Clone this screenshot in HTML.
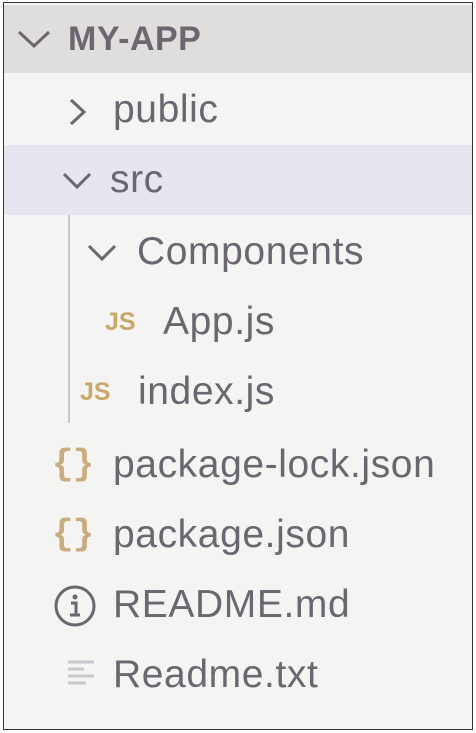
<!DOCTYPE html>
<html><head><style>
body{margin:0;width:476px;height:733px;background:#fff;overflow:hidden;}
#f{position:absolute;left:3px;top:2px;width:468px;height:726px;border:1px solid #333;background:#f4f4f3;}
.row{position:absolute;left:0;width:468px;height:70px;}
.t{position:absolute;font-family:"Liberation Sans",sans-serif;font-size:39px;letter-spacing:0.6px;color:#6b6670;line-height:70px;top:0;white-space:nowrap;}
svg{position:absolute;}
.js{position:absolute;font-family:"Liberation Sans",sans-serif;font-weight:bold;font-size:25px;color:#c9a86a;line-height:70px;}
.br{position:absolute;font-family:"Liberation Mono",monospace;font-weight:bold;font-size:36px;color:#c9ad80;line-height:70px;letter-spacing:-1px;}
</style></head><body>
<div id="f">
<div class="row" style="top:2px;background:#e0dedd;height:68px">
<svg style="left:12px;top:22px" width="36" height="24"><path d="M3 5 L18 19 L33 5" stroke="#6b6670" stroke-width="3" fill="none"/></svg>
<div class="t" style="left:64px;font-weight:bold;font-size:34px;letter-spacing:0.5px;line-height:68px">MY-APP</div></div>
<div class="row" style="top:72px">
<svg style="left:62px;top:22px" width="22" height="30"><path d="M5 3 L18 15 L5 27" stroke="#6b6670" stroke-width="3" fill="none"/></svg>
<div class="t" style="left:109px">public</div></div>
<div class="row" style="top:142px;background:#e6e6f0">
<svg style="left:57px;top:26px" width="32" height="20"><path d="M3 3 L16 16 L29 3" stroke="#6b6670" stroke-width="3" fill="none"/></svg>
<div class="t" style="left:106px">src</div></div>
<div style="position:absolute;left:64px;top:212px;width:2px;height:208px;background:#c9c8d2"></div>
<div class="row" style="top:214px">
<svg style="left:82px;top:26px" width="32" height="20"><path d="M3 3 L16 16 L29 3" stroke="#6b6670" stroke-width="3" fill="none"/></svg>
<div class="t" style="left:133px">Components</div></div>
<div class="row" style="top:284px">
<div class="js" style="left:101px">JS</div>
<div class="t" style="left:159px">App.js</div></div>
<div class="row" style="top:354px">
<div class="js" style="left:76px">JS</div>
<div class="t" style="left:134px">index.js</div></div>
<div class="row" style="top:427px">
<div class="br" style="left:48px">{}</div>
<div class="t" style="left:109px">package-lock.json</div></div>
<div class="row" style="top:497px">
<div class="br" style="left:48px">{}</div>
<div class="t" style="left:109px">package.json</div></div>
<div class="row" style="top:567px">
<svg style="left:49px;top:14px" width="44" height="44"><circle cx="22" cy="22" r="19" stroke="#6b6670" stroke-width="3" fill="none"/><circle cx="22" cy="13" r="2.5" fill="#6b6670"/><path d="M18 19h5v11M17 31h10" stroke="#6b6670" stroke-width="3" fill="none"/></svg>
<div class="t" style="left:109px">README.md</div></div>
<div class="row" style="top:637px">
<svg style="left:60px;top:18px" width="36" height="32"><g stroke="#c8c6cc" stroke-width="3"><path d="M4 4h26M4 11h16M4 18h26M4 25h18"/></g></svg>
<div class="t" style="left:109px">Readme.txt</div></div>
</div>
</body></html>
